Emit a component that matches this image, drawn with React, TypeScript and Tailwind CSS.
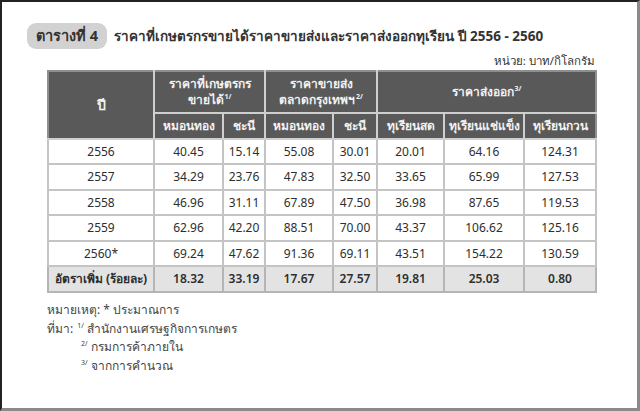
const rows = [
  ['2556', '40.45', '15.14', '55.08', '30.01', '20.01', '64.16', '124.31'],
  ['2557', '34.29', '23.76', '47.83', '32.50', '33.65', '65.99', '127.53'],
  ['2558', '46.96', '31.11', '67.89', '47.50', '36.98', '87.65', '119.53'],
  ['2559', '62.96', '42.20', '88.51', '70.00', '43.37', '106.62', '125.16'],
  ['2560*', '69.24', '47.62', '91.36', '69.11', '43.51', '154.22', '130.59'],
]

const rate = ['18.32', '33.19', '17.67', '27.57', '19.81', '25.03', '0.80']

function Sup({ n }: { n: string }) {
  return <span className="relative -top-[5px] ml-[1px] text-[7px] leading-none">{n}/</span>
}

export default function App() {
  return (
    <div className="w-[640px] h-[411px] bg-white font-['Noto_Sans','Liberation_Sans',sans-serif] text-[#3a3a3a]">
      <div className="w-[640px] h-[411px] border-t-2 border-l-2 border-t-[#222] border-l-[#222] border-r-[3px] border-b-[3px] border-r-[#8a8a8a] border-b-[#8a8a8a] pl-[25px] pr-[42px] pt-[21px]">
        <div className="flex items-center gap-[7px]">
          <span className="rounded-[9px] bg-[#d2d2d2] px-[9px] py-[2px] text-[14.5px] font-bold text-[#333]">
            ตารางที่ 4
          </span>
          <span className="text-[13.5px] font-bold text-[#333]">
            ราคาที่เกษตรกรขายได้ราคาขายส่งและราคาส่งออกทุเรียน ปี 2556 - 2560
          </span>
        </div>
        <div className="mt-[4px] text-right text-[11.5px] leading-[16px] text-[#333]">หน่วย: บาท/กิโลกรัม</div>

        <table className="ml-[20px] mt-[1px] border-collapse text-center text-[12px] table-fixed w-[548px]">
          <colgroup>
            <col className="w-[106px]" />
            <col className="w-[69px]" />
            <col className="w-[42px]" />
            <col className="w-[68px]" />
            <col className="w-[44px]" />
            <col className="w-[67px]" />
            <col className="w-[80px]" />
            <col className="w-[72px]" />
          </colgroup>
          <thead className="bg-[#595959] text-[#f2f2f2]">
            <tr className="h-[42px]">
              <th rowSpan={2} className="border-2 border-[#cfcfcf] border-t-[#8f8f8f] border-l-[#8f8f8f] text-[14px] font-bold">
                ปี
              </th>
              <th colSpan={2} className="border-2 border-[#cfcfcf] border-t-[#8f8f8f] font-bold leading-[16px]">
                ราคาที่เกษตรกร
                <br />
                ขายได้<Sup n="1" />
              </th>
              <th colSpan={2} className="border-2 border-[#cfcfcf] border-t-[#8f8f8f] font-bold leading-[16px]">
                ราคาขายส่ง
                <br />
                ตลาดกรุงเทพฯ<Sup n="2" />
              </th>
              <th colSpan={3} className="border-2 border-[#cfcfcf] border-t-[#8f8f8f] border-r-[#8f8f8f] font-bold">
                ราคาส่งออก<Sup n="3" />
              </th>
            </tr>
            <tr className="h-[26px]">
              {['หมอนทอง', 'ชะนี', 'หมอนทอง', 'ชะนี', 'ทุเรียนสด', 'ทุเรียนแช่แข็ง', 'ทุเรียนกวน'].map((h, i) => (
                <th
                  key={i}
                  className={`border-2 border-[#cfcfcf] font-bold whitespace-nowrap ${i === 6 ? 'border-r-[#8f8f8f]' : ''}`}
                >
                  {h}
                </th>
              ))}
            </tr>
          </thead>
          <tbody className="text-[#2e2e2e]">
            {rows.map((r) => (
              <tr key={r[0]} className="h-[25.5px]">
                {r.map((c, i) => (
                  <td key={i} className="border-2 border-[#c4c4c4] px-0">
                    {c}
                  </td>
                ))}
              </tr>
            ))}
            <tr className="h-[26px] bg-[#e3e3e3] font-semibold">
              <td className="border-2 border-[#b5b5b5] whitespace-nowrap font-bold">อัตราเพิ่ม (ร้อยละ)</td>
              {rate.map((c, i) => (
                <td key={i} className="border-2 border-[#b5b5b5]">
                  {c}
                </td>
              ))}
            </tr>
          </tbody>
        </table>

        <div className="ml-[20px] mt-[8px] text-[12px] leading-[18.5px] text-[#444]">
          <div>หมายเหตุ: * ประมาณการ</div>
          <div>
            ที่มา: <Sup n="1" /> สำนักงานเศรษฐกิจการเกษตร
          </div>
          <div className="pl-[33px]">
            <Sup n="2" /> กรมการค้าภายใน
          </div>
          <div className="pl-[33px]">
            <Sup n="3" /> จากการคำนวณ
          </div>
        </div>
      </div>
    </div>
  )
}
